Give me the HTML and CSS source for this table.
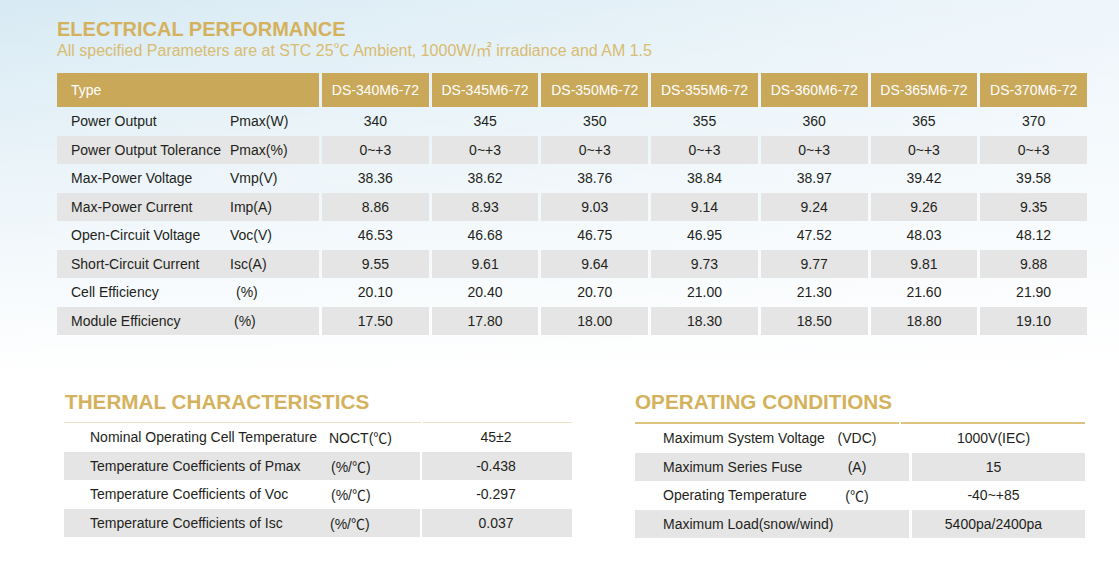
FILE: index.html
```html
<!DOCTYPE html>
<html lang="en">
<head>
<meta charset="utf-8">
<title>Electrical Performance</title>
<link rel="stylesheet" href="styles.css">
</head>
<body>
<div class="page">
  <section class="electrical">
    <h1 class="title">ELECTRICAL PERFORMANCE</h1>
    <p class="subtitle">All specified Parameters are at STC 25℃ Ambient, 1000W/㎡ irradiance and AM 1.5</p>
    <div class="etable">
      <div class="erow head">
        <div class="lab">Type</div>
        <div>DS-340M6-72</div><div>DS-345M6-72</div><div>DS-350M6-72</div><div>DS-355M6-72</div><div>DS-360M6-72</div><div>DS-365M6-72</div><div>DS-370M6-72</div>
      </div>
      <div class="erow">
        <div class="lab"><span class="name">Power Output</span><span class="unit">Pmax(W)</span></div>
        <div>340</div><div>345</div><div>350</div><div>355</div><div>360</div><div>365</div><div>370</div>
      </div>
      <div class="erow gray">
        <div class="lab"><span class="name">Power Output Tolerance</span><span class="unit">Pmax(%)</span></div>
        <div>0~+3</div><div>0~+3</div><div>0~+3</div><div>0~+3</div><div>0~+3</div><div>0~+3</div><div>0~+3</div>
      </div>
      <div class="erow">
        <div class="lab"><span class="name">Max-Power Voltage</span><span class="unit">Vmp(V)</span></div>
        <div>38.36</div><div>38.62</div><div>38.76</div><div>38.84</div><div>38.97</div><div>39.42</div><div>39.58</div>
      </div>
      <div class="erow gray">
        <div class="lab"><span class="name">Max-Power Current</span><span class="unit">Imp(A)</span></div>
        <div>8.86</div><div>8.93</div><div>9.03</div><div>9.14</div><div>9.24</div><div>9.26</div><div>9.35</div>
      </div>
      <div class="erow">
        <div class="lab"><span class="name">Open-Circuit Voltage</span><span class="unit">Voc(V)</span></div>
        <div>46.53</div><div>46.68</div><div>46.75</div><div>46.95</div><div>47.52</div><div>48.03</div><div>48.12</div>
      </div>
      <div class="erow gray">
        <div class="lab"><span class="name">Short-Circuit Current</span><span class="unit">Isc(A)</span></div>
        <div>9.55</div><div>9.61</div><div>9.64</div><div>9.73</div><div>9.77</div><div>9.81</div><div>9.88</div>
      </div>
      <div class="erow">
        <div class="lab"><span class="name">Cell Efficiency</span><span class="unit pct1">(%)</span></div>
        <div>20.10</div><div>20.40</div><div>20.70</div><div>21.00</div><div>21.30</div><div>21.60</div><div>21.90</div>
      </div>
      <div class="erow gray">
        <div class="lab"><span class="name">Module Efficiency</span><span class="unit pct2">(%)</span></div>
        <div>17.50</div><div>17.80</div><div>18.00</div><div>18.30</div><div>18.50</div><div>18.80</div><div>19.10</div>
      </div>
    </div>
  </section>

  <div class="bottom">
    <section class="thermal">
      <h2 class="title">THERMAL CHARACTERISTICS</h2>
      <div class="rule thin"><span></span><span></span></div>
      <div class="trow">
        <div class="lab"><span class="name">Nominal Operating Cell Temperature</span><span class="unit">NOCT(℃)</span></div>
        <div class="val">45±2</div>
      </div>
      <div class="trow gray">
        <div class="lab"><span class="name">Temperature Coefficients of Pmax</span><span class="unit u2">(%/℃)</span></div>
        <div class="val">-0.438</div>
      </div>
      <div class="trow">
        <div class="lab"><span class="name">Temperature Coefficients of Voc</span><span class="unit u2">(%/℃)</span></div>
        <div class="val">-0.297</div>
      </div>
      <div class="trow gray">
        <div class="lab"><span class="name">Temperature Coefficients of Isc</span><span class="unit u3">(%/℃)</span></div>
        <div class="val">0.037</div>
      </div>
    </section>

    <section class="operating">
      <h2 class="title">OPERATING CONDITIONS</h2>
      <div class="rule thick"><span></span><span></span></div>
      <div class="orow">
        <div class="lab"><span class="name">Maximum System Voltage</span><span class="unit">(VDC)</span></div>
        <div class="val">1000V(IEC)</div>
      </div>
      <div class="orow gray">
        <div class="lab"><span class="name">Maximum Series Fuse</span><span class="unit">(A)</span></div>
        <div class="val">15</div>
      </div>
      <div class="orow">
        <div class="lab"><span class="name">Operating Temperature</span><span class="unit">(℃)</span></div>
        <div class="val">-40~+85</div>
      </div>
      <div class="orow gray">
        <div class="lab"><span class="name">Maximum Load(snow/wind)</span><span class="unit"></span></div>
        <div class="val">5400pa/2400pa</div>
      </div>
    </section>
  </div>
</div>
</body>
</html>
```

FILE: styles.css
```css
html, body {
  margin: 0;
  padding: 0;
}

body {
  width: 1119px;
  height: 567px;
  overflow: hidden;
  font-family: "Liberation Sans", "Noto Sans CJK SC", sans-serif;
  color: #231f20;
  background:
    linear-gradient(to bottom, rgba(255,255,255,0) 0%, rgba(255,255,255,0.55) 35%, #ffffff 66%),
    linear-gradient(to right, #d8eaf4 0%, #e3f0f7 50%, #eef6fb 100%);
}

.page {
  padding: 17px 0 0 57px;
}

.title {
  margin: 0;
  font-size: 20px;
  line-height: 24px;
  font-weight: bold;
  color: #d4b25d;
}

.subtitle {
  margin: 1px 0 0 0;
  font-size: 16px;
  line-height: 18px;
  color: #d8bc6f;
}

/* Electrical table */
.etable {
  margin-top: 13px;
  width: 1030px;
}

.erow {
  display: grid;
  grid-template-columns: 262px repeat(7, 1fr);
  column-gap: 3px;
  height: 28.5px;
  font-size: 14px;
}

.erow > div {
  display: flex;
  align-items: center;
  justify-content: center;
}

.erow > .lab {
  justify-content: flex-start;
  padding-left: 14px;
}

.erow.head {
  height: 34px;
  color: #ffffff;
}

.erow.head > div {
  background: #c9a85a;
}

.erow.gray > div {
  background: #e6e5e5;
}

.erow .name {
  width: 159px;
  flex: none;
  white-space: nowrap;
}

.erow .unit.pct1 {
  padding-left: 6px;
}

.erow .unit.pct2 {
  padding-left: 4px;
}

/* Bottom sections */
.bottom {
  display: flex;
  margin-top: 55px;
  gap: 63px;
}

.bottom .title {
  font-size: 20.7px;
}

.thermal {
  width: 508px;
  margin-left: 7px;
}

.operating {
  width: 450px;
}

.thermal .title {
  padding-left: 1px;
}

.rule {
  display: flex;
  margin-top: 8px;
}

.rule.thin {
  height: 1px;
  gap: 2px;
}

.rule.thin span {
  background: #ece3cb;
}

.rule.thin span:first-child {
  width: 357px;
}

.rule.thin span:last-child {
  flex: 1;
}

.rule.thick {
  height: 2px;
  gap: 2px;
}

.rule.thick span {
  background: #dcc47f;
}

.rule.thick span:first-child {
  width: 264px;
}

.rule.thick span:last-child {
  flex: 1;
}

.trow,
.orow {
  display: grid;
  column-gap: 2px;
  height: 28.5px;
  font-size: 14px;
}

.trow {
  grid-template-columns: 356px 1fr;
}

.orow {
  grid-template-columns: 274px 1fr;
  column-gap: 3px;
}

.trow > div,
.orow > div {
  display: flex;
  align-items: center;
}

.gray > .lab,
.gray > .val {
  background: #e6e5e5;
}

.trow .lab {
  padding-left: 26px;
}

.trow .name {
  width: 239px;
  flex: none;
  white-space: nowrap;
}

.trow .unit.u2 {
  padding-left: 2px;
}

.trow .unit.u3 {
  padding-left: 1px;
}

.trow .val {
  justify-content: center;
  padding-right: 2px;
}

.orow .lab {
  padding-left: 28px;
}

.orow .name {
  width: 171px;
  flex: none;
  white-space: nowrap;
}

.orow .unit {
  width: 46px;
  text-align: center;
}

.orow .val {
  justify-content: center;
  padding-right: 10px;
}
```
